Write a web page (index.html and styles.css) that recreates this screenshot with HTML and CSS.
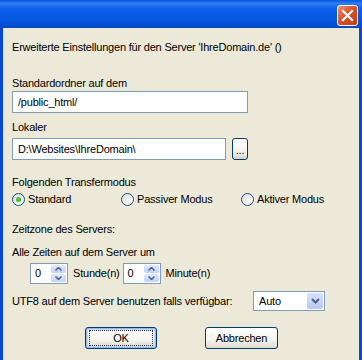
FILE: index.html
```html
<!DOCTYPE html>
<html>
<head>
  <title>Erweiterte Einstellungen</title>
  <link rel="stylesheet" href="styles.css">
</head>
<body>
  <div class="window">
    <div class="titlebar">
      <div class="close">
        <svg width="13" height="13" viewBox="0 0 13 13">
          <path d="M2 2 L11 11 M11 2 L2 11" stroke="#fff" stroke-width="2.2" stroke-linecap="square"/>
        </svg>
      </div>
    </div>

    <div class="content">
      <div class="intro">Erweiterte Einstellungen für den Server 'IhreDomain.de' ()</div>

      <div class="label first">Standardordner auf dem</div>
      <div class="textbox wide">/public_html/</div>

      <div class="label local">Lokaler</div>
      <div class="row local-row">
        <div class="textbox local-box">D:\Websites\IhreDomain\</div>
        <div class="browse">...</div>
      </div>

      <div class="label mode">Folgenden Transfermodus</div>
      <div class="radios">
        <div class="radio"><span class="dot checked"></span>Standard</div>
        <div class="radio"><span class="dot"></span>Passiver Modus</div>
        <div class="radio"><span class="dot"></span>Aktiver Modus</div>
      </div>

      <div class="label zone">Zeitzone des Servers:</div>
      <div class="label times">Alle Zeiten auf dem Server um</div>
      <div class="row spin-row">
        <div class="spinner">
          <div class="spin-value">0</div>
          <div class="spin-btns">
            <div class="spin-btn"><svg width="7" height="4" viewBox="0 0 7 4"><path d="M0.5 3.5 L3.5 0.5 L6.5 3.5" fill="none" stroke="#4d6185" stroke-width="1.5"/></svg></div>
            <div class="spin-btn"><svg width="7" height="4" viewBox="0 0 7 4"><path d="M0.5 0.5 L3.5 3.5 L6.5 0.5" fill="none" stroke="#4d6185" stroke-width="1.5"/></svg></div>
          </div>
        </div>
        <span class="unit">Stunde(n)</span>
        <div class="spinner">
          <div class="spin-value">0</div>
          <div class="spin-btns">
            <div class="spin-btn"><svg width="7" height="4" viewBox="0 0 7 4"><path d="M0.5 3.5 L3.5 0.5 L6.5 3.5" fill="none" stroke="#4d6185" stroke-width="1.5"/></svg></div>
            <div class="spin-btn"><svg width="7" height="4" viewBox="0 0 7 4"><path d="M0.5 0.5 L3.5 3.5 L6.5 0.5" fill="none" stroke="#4d6185" stroke-width="1.5"/></svg></div>
          </div>
        </div>
        <span class="unit">Minute(n)</span>
      </div>

      <div class="row utf-row">
        <div class="utf-label">UTF8 auf dem Server benutzen falls verfügbar:</div>
        <div class="select">
          <div class="select-value">Auto</div>
          <div class="select-btn">
            <svg width="9" height="6" viewBox="0 0 9 6"><path d="M1 1 L4.5 4.5 L8 1" fill="none" stroke="#4d6185" stroke-width="2"/></svg>
          </div>
        </div>
      </div>

      <div class="row buttons">
        <div class="button default"><span class="focus">OK</span></div>
        <div class="button">Abbrechen</div>
      </div>
    </div>
  </div>
</body>
</html>
```

FILE: styles.css
```css
body {
  margin: 0;
  width: 362px;
  height: 360px;
  overflow: hidden;
  background: #ece9d8;
  font-family: "Liberation Sans", Arial, sans-serif;
  font-size: 11px;
  line-height: 13px;
  letter-spacing: -0.2px;
  color: #000;
}

.window {
  display: flex;
  flex-direction: column;
  height: 372px;
}

.titlebar {
  height: 28px;
  flex: none;
  display: flex;
  justify-content: flex-end;
  align-items: center;
  padding-right: 4px;
  background: linear-gradient(#0453dd 0%, #2f7ef2 12%, #0a5fe8 32%, #0555de 75%, #0349c9 100%);
}

.close {
  width: 19px;
  height: 19px;
  border: 1px solid #fff;
  border-radius: 3px;
  background: linear-gradient(135deg, #ec9476 0%, #d9542c 45%, #c03b15 100%);
  display: flex;
  align-items: center;
  justify-content: center;
  margin-top: 2px;
}

.content {
  flex: 1;
  background: #ece9d8;
  border-left: 3px solid #0a48d4;
  border-right: 3px solid #0a48d4;
  padding: 13px 9px 0;
}

.row {
  display: flex;
  align-items: center;
}

.label.first {
  margin-top: 23px;
}

.label.local {
  margin-top: 8px;
}

.label.mode {
  margin-top: 16px;
}

.label.zone {
  margin-top: 17px;
}

.label.times {
  margin-top: 10px;
}

.textbox {
  box-sizing: border-box;
  height: 22px;
  border: 1px solid #7f9db9;
  background: #fff;
  padding: 0 5px;
  display: flex;
  align-items: center;
}

.textbox.wide {
  width: 236px;
  margin-top: 1px;
}

.local-row {
  margin-top: 4px;
}

.textbox.local-box {
  width: 214px;
}

.browse {
  box-sizing: border-box;
  width: 16px;
  height: 22px;
  margin-left: 6px;
  border: 1px solid #003c74;
  border-radius: 3px;
  background: linear-gradient(#ffffff, #f0f0ea 70%, #d6d0c5);
  display: flex;
  align-items: flex-end;
  justify-content: center;
  padding-bottom: 4px;
  line-height: 9px;
}

.radios {
  display: grid;
  grid-template-columns: 109px 120px auto;
  margin-top: 3px;
}

.radio {
  display: flex;
  align-items: center;
  height: 14px;
}

.dot {
  box-sizing: border-box;
  width: 13px;
  height: 13px;
  border-radius: 50%;
  border: 1px solid #1c5180;
  background: linear-gradient(135deg, #dcdcd6, #ffffff);
  margin-right: 3px;
  display: flex;
  align-items: center;
  justify-content: center;
}

.dot.checked::after {
  content: "";
  width: 5px;
  height: 5px;
  border-radius: 50%;
  background: radial-gradient(circle at 40% 40%, #5fd35f, #21a121);
}

.spin-row {
  margin-top: 4px;
  padding-left: 18px;
}

.spinner {
  box-sizing: border-box;
  width: 38px;
  height: 21px;
  border: 1px solid #7f9db9;
  background: #fff;
  display: flex;
  padding: 1px;
}

.spin-value {
  flex: 1;
  padding-left: 3px;
  display: flex;
  align-items: center;
}

.spin-btns {
  width: 15px;
  display: flex;
  flex-direction: column;
  gap: 1px;
}

.spin-btn {
  flex: 1;
  background: linear-gradient(#e0e9fd, #c0d1f8);
  border-radius: 2px;
  display: flex;
  align-items: center;
  justify-content: center;
}

.unit {
  margin: 0 3px 0 5px;
}

.utf-row {
  margin-top: 7px;
}

.utf-label {
  width: 241px;
}

.select {
  box-sizing: border-box;
  width: 72px;
  height: 20px;
  border: 1px solid #7f9db9;
  background: #fff;
  display: flex;
  padding: 1px;
}

.select-value {
  flex: 1;
  padding-left: 4px;
  display: flex;
  align-items: center;
}

.select-btn {
  width: 16px;
  border-radius: 2px;
  background: linear-gradient(#d6e1fc, #b6c9f6);
  display: flex;
  align-items: center;
  justify-content: center;
}

.buttons {
  margin-top: 16px;
  padding-left: 73px;
  gap: 48px;
}

.button {
  box-sizing: border-box;
  width: 73px;
  height: 22px;
  border: 1px solid #003c74;
  border-radius: 3px;
  background: linear-gradient(#ffffff, #f4f4f0 60%, #dcd8cc);
  display: flex;
  align-items: center;
  justify-content: center;
}

.button.default {
  width: 72px;
  box-shadow: inset 0 0 0 1px #98b8ee, inset 0 0 0 2px #c6d6f6;
}

.focus {
  box-sizing: border-box;
  width: 64px;
  height: 16px;
  border: 1px dotted #333;
  display: flex;
  align-items: center;
  justify-content: center;
}
```
